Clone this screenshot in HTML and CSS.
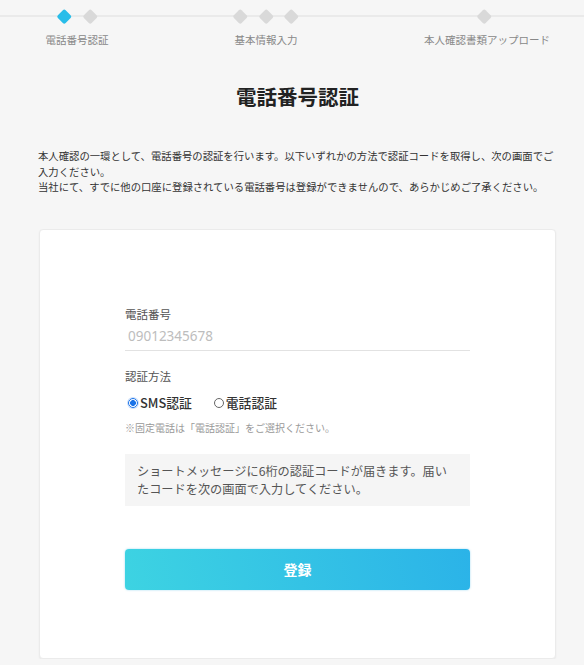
FILE: index.html
```html
<!DOCTYPE html>
<html lang="ja">
<head>
<meta charset="UTF-8">
<meta name="viewport" content="width=device-width, initial-scale=1.0">
<title>電話番号認証</title>
<link rel="stylesheet" href="styles.css">
</head>
<body>

<div class="stepper">
  <div class="step step-1">
    <div class="marks">
      <span class="dia active"></span>
      <span class="dia"></span>
    </div>
    <p>電話番号認証</p>
  </div>
  <div class="step step-2">
    <div class="marks">
      <span class="dia"></span>
      <span class="dia"></span>
      <span class="dia"></span>
    </div>
    <p>基本情報入力</p>
  </div>
  <div class="step step-3">
    <div class="marks">
      <span class="dia"></span>
    </div>
    <p>本人確認書類アップロード</p>
  </div>
</div>

<div id="container">
  <h1 class="title">電話番号認証</h1>
  <p class="lead">本人確認の一環として、電話番号の認証を行います。以下いずれかの方法で認証コードを取得し、次の画面でご入力ください。<br>当社にて、すでに他の口座に登録されている電話番号は登録ができませんので、あらかじめご了承ください。</p>

  <div id="card">
    <form class="form" onsubmit="return false">
      <label class="field-label" for="tel">電話番号</label>
      <input type="tel" id="tel" class="tel" placeholder="09012345678">

      <div class="field-label method">認証方法</div>
      <div class="radios">
        <label class="radio"><input type="radio" name="method" checked>SMS認証</label>
        <label class="radio"><input type="radio" name="method">電話認証</label>
      </div>
      <p class="note">※固定電話は「電話認証」をご選択ください。</p>

      <div class="info">ショートメッセージに6桁の認証コードが届きます。届いたコードを次の画面で入力してください。</div>

      <button type="submit" class="submit">登録</button>
    </form>
  </div>
</div>

</body>
</html>
```

FILE: styles.css
```css
body {
  margin: 0;
  background-color: #f6f6f6;
  font-family: "Noto Sans CJK JP", "Noto Sans", sans-serif;
  color: #333;
}
.stepper {
  display: flex;
  background: linear-gradient(#eaeaea, #eaeaea) 0 15px / 100% 2px no-repeat;
}
.step {
  width: 120px;
  text-align: center;
}
.step-1 {
  margin-left: 17px;
}
.step-2 {
  margin-left: 69px;
}
.step-3 {
  margin-left: 98px;
}
.marks {
  height: 32px;
  display: flex;
  justify-content: center;
  align-items: center;
  gap: 15px;
}
.dia {
  width: 10.5px;
  height: 10.5px;
  border-radius: 2px;
  background-color: #d9d9d9;
  transform: rotate(45deg);
}
.dia.active {
  background-color: #29bde9;
}
.step p {
  margin: 0;
  font-size: 10.5px;
  line-height: 16px;
  color: #888;
  white-space: nowrap;
}
#container {
  margin-left: 39px;
  width: 517px;
}
.title {
  margin: 34px 0 0;
  font-size: 20.5px;
  line-height: 28px;
  font-weight: 700;
  text-align: center;
  color: #222;
}
.lead {
  margin: 38px 0 0 -1px;
  font-size: 10.35px;
  line-height: 15.5px;
  color: #333;
}
#card {
  margin-top: 34px;
  height: 430px;
  box-sizing: border-box;
  background-color: #fff;
  border: 1px solid #ebebeb;
  border-radius: 4px;
  box-shadow: 0px 1px 2px rgba(0,0,0,0.06);
  padding: 75px 85px 0;
}
.form {
  display: flex;
  flex-direction: column;
}
.field-label {
  font-size: 11.5px;
  line-height: 18px;
  color: #555;
}
.method {
  margin-top: 16px;
}
.tel {
  height: 28px;
  box-sizing: border-box;
  padding: 0 3px;
  border: none;
  border-bottom: 1px solid #e2e2e2;
  background: transparent;
  font-family: "Noto Sans", sans-serif;
  font-size: 13.5px;
  color: #333;
  outline: none;
}
.tel::placeholder {
  color: #bdbdbd;
}
.radios {
  display: flex;
  gap: 22px;
  margin-top: 8px;
  padding-left: 3px;
}
.radio {
  display: flex;
  align-items: center;
  gap: 2px;
  font-size: 12.8px;
  line-height: 20px;
  font-weight: 500;
  color: #333;
}
.radio input {
  appearance: none;
  margin: 0;
  width: 10px;
  height: 10px;
  border: 1px solid #666;
  border-radius: 50%;
  background-color: #fff;
}
.radio input:checked {
  border-color: #1a73e8;
  background: radial-gradient(circle, #1a73e8 0 2.6px, #fff 3.2px);
  box-shadow: 0 0 0 1px #cfe1fb;
}
.note {
  margin: 7px 0 0;
  font-size: 10px;
  line-height: 16px;
  color: #999;
}
.info {
  margin-top: 18px;
  padding: 8px 18px 8px 12px;
  background-color: #f5f5f5;
  font-size: 12.2px;
  line-height: 18px;
  color: #555;
}
.submit {
  margin-top: 43px;
  height: 41px;
  border: none;
  border-radius: 4px;
  background: linear-gradient(75deg, #3dd3e2, #2bb3e8);
  box-shadow: 0px 0px 2px rgba(43,179,232,0.5);
  color: #fff;
  font-family: inherit;
  font-size: 14px;
  font-weight: 700;
  cursor: pointer;
}
```
